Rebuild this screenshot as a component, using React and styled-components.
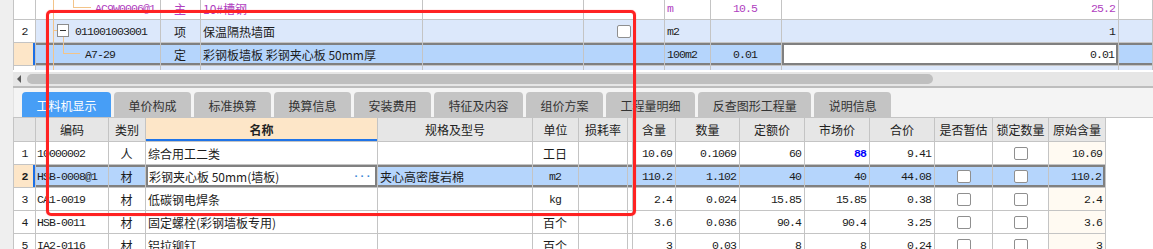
import React from 'react';
import styled, { createGlobalStyle } from 'styled-components';

const CJK = `"Noto Sans CJK SC", "Noto Sans", sans-serif`;
const MONO = `"Liberation Mono", "Noto Sans CJK SC", monospace`;

const GlobalStyle = createGlobalStyle`
  html, body { margin: 0; padding: 0; background: #efefef; }
  body { font-family: ${CJK}; }
`;

const TOP_COLS = '22px 125px 40px 222px 161px 81px 46px 71px 337px 1fr';
const BOT_COLS = '22px 73px 37px 232px 155px 46px 49px 5px 43px 64px 65px 65px 65px 58px 56px 57px 1fr';

const C = {
  line: '#c4c4c4',
  light: '#dce8fb',
  sel: '#b5d5fc',
  peach: '#fde6c8',
  cream: '#fffaf2',
  dark: '#808080',
  purple: '#b040c0',
  tree: '#f3c489',
};

const FRAMES = {
  row: `inset 0 2px ${C.dark}, inset 0 -2px ${C.dark}`,
  edit: `inset 0 0 0 2px ${C.dark}`,
  end: `inset 0 2px ${C.dark}, inset 0 -2px ${C.dark}, inset -2px 0 ${C.dark}`,
  mark: `inset -2px 0 #1c6fe6`,
};

const MONO_SIZE = '11.5px';
const MONO_SPACING = '-0.9px';

const Page = styled.div`
  position: relative;
  width: 1153px;
  height: 249px;
  overflow: hidden;
  box-sizing: border-box;
  padding-left: 13px;
  background: #efefef;
  display: flex;
  flex-direction: column;
`;

const Pane = styled.div`
  background: #fff;
  border-left: 1px solid ${C.line};
  overflow: hidden;
  flex: ${p => (p.$fill ? '1' : 'none')};
  height: ${p => (p.$h ? `${p.$h}px` : 'auto')};
`;

const TopInner = styled.div`
  margin-top: -3px;
`;

const Row = styled.div`
  display: grid;
  grid-template-columns: ${p => p.$cols};
  height: ${p => p.$h || 23}px;
`;

const Cell = styled.div`
  box-sizing: border-box;
  min-width: 0;
  border-right: ${p => (p.$noBorder ? 'none' : `1px solid ${C.line}`)};
  border-bottom: ${p => (p.$noBorder ? 'none' : `1px solid ${C.line}`)};
  display: flex;
  align-items: center;
  justify-content: ${p =>
    p.$align === 'right' ? 'flex-end' : p.$align === 'center' ? 'center' : p.$align === 'between' ? 'space-between' : 'flex-start'};
  padding: 0 ${p => p.$pr ?? 3}px 0 ${p => p.$pl ?? 2}px;
  background: ${p => p.$bg || 'transparent'};
  color: ${p => p.$color || '#1c1c1c'};
  font-family: ${p => (p.$mono ? MONO : CJK)};
  font-size: ${p => (p.$mono ? MONO_SIZE : '12px')};
  letter-spacing: ${p => (p.$mono ? MONO_SPACING : '0')};
  font-weight: ${p => (p.$bold ? 700 : 400)};
  white-space: nowrap;
  overflow: hidden;
  box-shadow: ${p => (p.$frame ? FRAMES[p.$frame] : 'none')};
`;

const HeadCell = styled.div`
  box-sizing: border-box;
  min-width: 0;
  border-top: 1px solid ${C.line};
  border-right: ${p => (p.$filler ? 'none' : `1px solid ${C.line}`)};
  border-bottom: ${p => (p.$filler ? 'none' : `1px solid ${C.line}`)};
  background: ${p => (p.$filler ? '#fff' : p.$active ? C.peach : '#e6e6e6')};
  box-shadow: ${p => (p.$active ? 'inset 0 -2px #1f74e8' : 'none')};
  display: flex;
  align-items: center;
  justify-content: center;
  font-family: ${CJK};
  font-size: 12px;
  font-weight: ${p => (p.$active ? 700 : 400)};
  color: #222;
  white-space: nowrap;
  overflow: hidden;
`;

const Check = styled.span`
  display: inline-block;
  width: 14px;
  height: 13px;
  box-sizing: border-box;
  border: 1px solid #8f8f8f;
  border-radius: 2px;
  background: #fff;
`;

const Dots = styled.span`
  color: #3d8ad6;
  font-family: ${MONO};
  font-size: 11px;
  letter-spacing: -0.5px;
  font-weight: 700;
`;

const Label = styled.span`
  font-family: ${p => (p.$mono ? MONO : CJK)};
  font-size: ${p => (p.$mono ? MONO_SIZE : '12px')};
  letter-spacing: ${p => (p.$mono ? MONO_SPACING : '0')};
  color: ${p => p.$color || 'inherit'};
`;

const HScroll = styled.div`
  flex: none;
  height: 18px;
  box-sizing: border-box;
  border-top: 2px solid #fff;
  border-bottom: 2px solid #bdbdbd;
  background: #e6e6e6;
  display: flex;
  align-items: center;
`;

const Thumb = styled.div`
  width: 906px;
  height: 10px;
  border-radius: 5px;
  background: #bfbfbf;
`;

const TabStrip = styled.div`
  flex: none;
  height: 29px;
  box-sizing: border-box;
  padding-left: 8px;
  background: #f4f4f4;
  border-left: 1px solid #e2e2e2;
  display: flex;
  align-items: flex-end;
  gap: 3px;
`;

const Tab = styled.div`
  height: 25px;
  box-sizing: border-box;
  padding: 2px 14.5px 0;
  border-radius: 4px 4px 0 0;
  background: ${p => (p.$active ? '#479ef6' : '#c4c4c4')};
  color: ${p => (p.$active ? '#fff' : '#333')};
  font-family: ${CJK};
  font-size: 12px;
  display: flex;
  align-items: center;
  white-space: nowrap;
`;

const Annotation = styled.div`
  position: absolute;
  left: 46px;
  top: 10px;
  width: 590px;
  height: 206px;
  box-sizing: border-box;
  border: 3px solid #ff2222;
  border-radius: 5px;
  box-shadow: 0 0 1px rgba(255, 0, 0, 0.6);
  pointer-events: none;
`;

/* tree connector drawings */
const Tree = ({ kind }) => {
  const s = { stroke: C.tree, strokeWidth: 1, fill: 'none' };
  if (kind === 'child')
    return (
      <svg width="59" height="22" style={{ flex: 'none' }}>
        <line x1="17.5" y1="0" x2="17.5" y2="22" {...s} />
        <line x1="37.5" y1="0" x2="37.5" y2="10.5" {...s} />
        <line x1="37" y1="10.5" x2="55" y2="10.5" {...s} />
      </svg>
    );
  if (kind === 'parent')
    return (
      <svg width="39" height="22" style={{ flex: 'none' }}>
        <line x1="17.5" y1="0" x2="17.5" y2="22" {...s} />
        <line x1="17" y1="10.5" x2="21" y2="10.5" {...s} />
        <line x1="27.5" y1="16.5" x2="27.5" y2="22" {...s} />
        <rect x="21.5" y="4.5" width="11" height="12" fill="#fff" stroke="#8c8c8c" />
        <line x1="24" y1="10.5" x2="30" y2="10.5" stroke="#333" />
      </svg>
    );
  if (kind === 'leaf')
    return (
      <svg width="49" height="22" style={{ flex: 'none' }}>
        <line x1="17.5" y1="0" x2="17.5" y2="22" {...s} />
        <line x1="27.5" y1="0" x2="27.5" y2="10.5" {...s} />
        <line x1="27" y1="10.5" x2="44" y2="10.5" {...s} />
      </svg>
    );
  return (
    <svg width="20" height="22" style={{ flex: 'none' }}>
      <line x1="17.5" y1="0" x2="17.5" y2="22" {...s} />
    </svg>
  );
};

const LeftArrow = () => (
  <svg width="14" height="14" style={{ flex: 'none' }}>
    <polygon points="4,7 8,3 8,11" fill="#5a5a5a" />
  </svg>
);

const TopGrid = () => (
  <Pane $h={70}>
    <TopInner>
      <Row $cols={TOP_COLS}>
        <Cell $bg="#fff" />
        <Cell $pl={0}>
          <Tree kind="child" />
          <Label $mono $color={C.purple}>AC9W0006@1</Label>
        </Cell>
        <Cell $align="center" $color={C.purple}>主</Cell>
        <Cell $color={C.purple}>10#槽钢</Cell>
        <Cell />
        <Cell />
        <Cell $mono $color={C.purple}>m</Cell>
        <Cell $mono $align="right" $pr={24} $color={C.purple}>10.5</Cell>
        <Cell $mono $align="right" $color={C.purple}>25.2</Cell>
        <Cell />
      </Row>
      <Row $cols={TOP_COLS}>
        <Cell $bg="#fff" $mono $align="center" $pl={0} $pr={0}>2</Cell>
        <Cell $bg={C.light} $pl={0}>
          <Tree kind="parent" />
          <Label $mono>011001003001</Label>
        </Cell>
        <Cell $bg={C.light} $align="center">项</Cell>
        <Cell $bg={C.light}>保温隔热墙面</Cell>
        <Cell $bg={C.light} />
        <Cell $bg={C.light} $align="center" $pl={0} $pr={0}><Check /></Cell>
        <Cell $bg={C.light} $mono>m2</Cell>
        <Cell $bg={C.light} />
        <Cell $bg={C.light} $mono $align="right">1</Cell>
        <Cell $bg={C.light} />
      </Row>
      <Row $cols={TOP_COLS}>
        <Cell $bg={C.peach} $frame="mark" />
        <Cell $bg={C.sel} $frame="row" $pl={0}>
          <Tree kind="leaf" />
          <Label $mono>A7-29</Label>
        </Cell>
        <Cell $bg={C.sel} $frame="row" $align="center">定</Cell>
        <Cell $bg={C.sel} $frame="row">彩钢板墙板 彩钢夹心板 50mm厚</Cell>
        <Cell $bg={C.sel} $frame="row" />
        <Cell $bg={C.sel} $frame="row" />
        <Cell $bg={C.sel} $frame="row" $mono>100m2</Cell>
        <Cell $bg={C.sel} $frame="row" $mono $align="right" $pr={24}>0.01</Cell>
        <Cell $bg="#fff" $frame="edit" $mono $align="right" $pr={4}>0.01</Cell>
        <Cell $bg={C.sel} $frame="row" />
      </Row>
      <Row $cols={TOP_COLS}>
        <Cell $bg="#fff" />
        <Cell $bg={C.light} $pl={0}><Tree kind="line" /></Cell>
        <Cell $bg={C.light} />
        <Cell $bg={C.light} />
        <Cell $bg={C.light} />
        <Cell $bg={C.light} />
        <Cell $bg={C.light} />
        <Cell $bg={C.light} />
        <Cell $bg={C.light} />
        <Cell $bg={C.light} />
      </Row>
    </TopInner>
  </Pane>
);

const TABS = ['工料机显示', '单价构成', '标准换算', '换算信息', '安装费用', '特征及内容', '组价方案', '工程量明细', '反查图形工程量', '说明信息'];

const HEADERS = ['', '编码', '类别', '名称', '规格及型号', '单位', '损耗率', '', '含量', '数量', '定额价', '市场价', '合价', '是否暂估', '锁定数量', '原始含量'];

const ROWS = [
  { n: '1', code: '10000002', type: '人', name: '综合用工二类', spec: '', unit: '工日', qty: '10.69', amt: '0.1069', price: '60', market: '88', total: '9.41', est: false, orig: '10.69' },
  { n: '2', code: 'HSB-0008@1', type: '材', name: '彩钢夹心板 50mm(墙板)', spec: '夹心高密度岩棉', unit: 'm2', unitMono: true, qty: '110.2', amt: '1.102', price: '40', market: '40', total: '44.08', est: true, orig: '110.2', selected: true },
  { n: '3', code: 'CA1-0019', type: '材', name: '低碳钢电焊条', spec: '', unit: 'kg', unitMono: true, qty: '2.4', amt: '0.024', price: '15.85', market: '15.85', total: '0.38', est: true, orig: '2.4' },
  { n: '4', code: 'HSB-0011', type: '材', name: '固定螺栓(彩钢墙板专用)', spec: '', unit: '百个', qty: '3.6', amt: '0.036', price: '90.4', market: '90.4', total: '3.25', est: true, orig: '3.6' },
  { n: '5', code: 'IA2-0116', type: '材', name: '铝拉铆钉', spec: '', unit: '百个', qty: '3', amt: '0.03', price: '8', market: '8', total: '0.24', est: true, orig: '3' },
];

const DataRow = ({ r }) => {
  const sel = r.selected;
  const bg = sel ? C.sel : '#fff';
  const f = sel ? 'row' : undefined;
  const hot = r.market === '88';
  return (
    <Row $cols={BOT_COLS}>
      <Cell $bg={sel ? C.peach : '#fff'} $frame={sel ? 'mark' : undefined} $mono $bold={sel} $align="center" $pl={0} $pr={0}>
        {r.n}
      </Cell>
      <Cell $bg={bg} $frame={f} $mono $pl={1}>{r.code}</Cell>
      <Cell $bg={bg} $frame={f} $align="center">{r.type}</Cell>
      {sel ? (
        <Cell $bg="#fff" $frame="edit" $align="between" $pr={6} $pl={3}>
          <span>{r.name}</span>
          <Dots>···</Dots>
        </Cell>
      ) : (
        <Cell $bg={bg} $pl={2}>{r.name}</Cell>
      )}
      <Cell $bg={bg} $frame={f}>{r.spec}</Cell>
      <Cell $bg={bg} $frame={f} $mono={r.unitMono} $align="center">{r.unit}</Cell>
      <Cell $bg={bg} $frame={f} />
      <Cell $bg={bg} $frame={f} $pl={0} $pr={0} />
      <Cell $bg={bg} $frame={f} $mono $align="right">{r.qty}</Cell>
      <Cell $bg={bg} $frame={f} $mono $align="right">{r.amt}</Cell>
      <Cell $bg={bg} $frame={f} $mono $align="right">{r.price}</Cell>
      <Cell $bg={bg} $frame={f} $mono $align="right" $bold={hot} $color={hot ? '#0000ff' : undefined}>
        {r.market}
      </Cell>
      <Cell $bg={bg} $frame={f} $mono $align="right">{r.total}</Cell>
      <Cell $bg={bg} $frame={f} $align="center" $pl={0} $pr={0}>{r.est && <Check />}</Cell>
      <Cell $bg={bg} $frame={f} $align="center" $pl={0} $pr={0}><Check /></Cell>
      <Cell $bg={sel ? C.sel : C.cream} $frame={sel ? 'end' : undefined} $mono $align="right" $pr={sel ? 4 : 3}>{r.orig}</Cell>
      <Cell $noBorder />
    </Row>
  );
};

const BottomGrid = () => (
  <Pane $fill>
    <Row $cols={BOT_COLS} $h={25}>
      {HEADERS.map((h, i) => (
        <HeadCell key={i} $active={h === '名称'}>{h}</HeadCell>
      ))}
      <HeadCell $filler />
    </Row>
    {ROWS.map(r => (
      <DataRow key={r.n} r={r} />
    ))}
  </Pane>
);

export default function App() {
  return (
    <>
      <GlobalStyle />
      <Page>
        <TopGrid />
        <HScroll>
          <LeftArrow />
          <Thumb />
        </HScroll>
        <TabStrip>
          {TABS.map((t, i) => (
            <Tab key={t} $active={i === 0}>{t}</Tab>
          ))}
        </TabStrip>
        <BottomGrid />
        <Annotation />
      </Page>
    </>
  );
}
